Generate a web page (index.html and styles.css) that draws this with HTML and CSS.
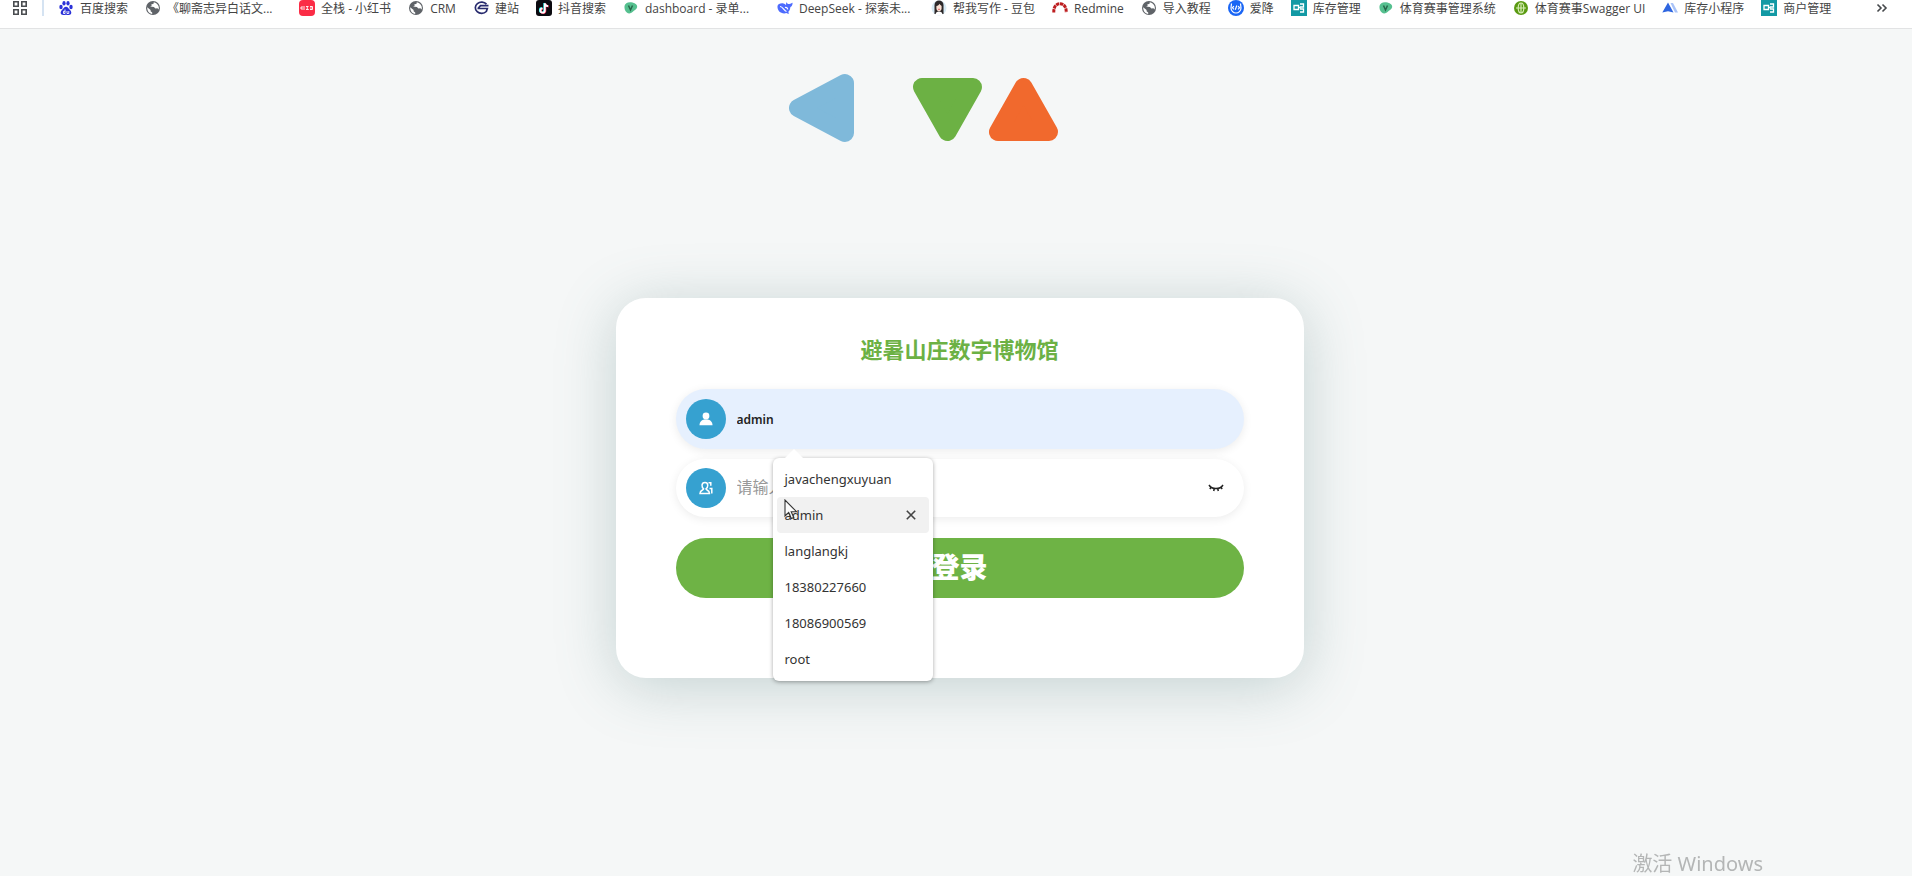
FILE: index.html
```html
<!DOCTYPE html>
<html lang="zh-CN">
<head>
    <meta charset="UTF-8">
    <meta name="viewport" content="width=device-width, initial-scale=1.0">
    <title>避暑山庄数字博物馆</title>
    <link rel="stylesheet" href="styles.css">
</head>
<body>

    <!-- shared icons -->
    <svg class="sprite" aria-hidden="true">
        <symbol id="globe" viewBox="0 0 16 16">
            <circle cx="8" cy="8" r="7" fill="#5f6368"/>
            <path d="M2.2 7.2 5.6 10v1.2l1.6 1.4v1.3C4.300 13.500 2 11 2.200 7.200zM8.800 2.200l-.4 1.700-2 .4.200 1.600-1.600.7 3.900.3 1.500 1.600 2-.2 1.200 1.300c.9-2.700-.3-6-4.800-7.400z" fill="#fff"/>
        </symbol>
        <symbol id="leaf" viewBox="0 0 16 16">
            <path d="M1.500 6C2 2.500 6 1.500 9.500 2.500c3 .8 5 2.500 4.700 4.500-.3 2.500-3 3.300-4.700 5-1.500 1.600-4 2-5.700.5C2 11 1.200 8.500 1.500 6z" fill="#55c08f"/>
            <path d="M5.500 5.500 7.500 10l2-4.500" fill="none" stroke="#27664a" stroke-width="1.500"/>
        </symbol>
        <symbol id="stock" viewBox="0 0 16 16">
            <path d="M0 0h16v16H0z" fill="#1299a4"/>
            <path d="M3 5.500h4.500v4H3zM9 4h3.500v3H9M9 9h3.500v3H9M7.500 7.500H9.500" fill="none" stroke="#fff" stroke-width="1.300"/>
        </symbol>
    </svg>

    <nav class="bookmarks">
        <button type="button" class="apps" aria-label="Apps">
            <svg width="16" height="16" viewBox="0 0 16 16" fill="none" stroke="#4a4d50" stroke-width="1.600"><path d="M1.800 1.800h4.400v4.400H1.800zM9.800 1.800h4.400v4.400H9.800zM1.800 9.800h4.400v4.400H1.800zM9.800 9.800h4.400v4.400H9.800z"/></svg>
        </button>
        <span class="divider"></span>
        <a href="#">
            <svg viewBox="0 0 16 16" fill="#2b32d8"><ellipse cx="3" cy="7" rx="1.700" ry="2.200"/><ellipse cx="6" cy="3.300" rx="1.600" ry="2.200"/><ellipse cx="10" cy="3.300" rx="1.600" ry="2.200"/><ellipse cx="13" cy="7" rx="1.700" ry="2.200"/><path d="M8 6.800c-2 0-2.600 2-4 3.200-2.200 2-1.500 5 1.200 5 1 0 1.800-.3 2.800-.3s1.800.3 2.800.3c2.700 0 3.400-3 1.200-5C10.600 8.800 10 6.800 8 6.800z"/><path d="M7 9.500v4H5.500v-2.200H7M9 11v2.500h1.800V11" fill="none" stroke="#fff" stroke-width=".9"/></svg>
            <span>百度搜索</span>
        </a>
        <a href="#">
            <svg><use href="#globe"/></svg>
            <span class="long">《聊斋志异白话文...</span>
        </a>
        <a href="#">
            <svg viewBox="0 0 16 16"><rect width="16" height="16" rx="4" fill="#fb2c46"/><path d="M3 6v4M5 6v4M2 7v2M7 6.500h2.500M8.300 6.500v3M7 9.500h2.800M11 6.500h2.500v3H11M12 6v4" stroke="#fff" stroke-width=".9" fill="none"/></svg>
            <span>全栈 - 小红书</span>
        </a>
        <a href="#">
            <svg><use href="#globe"/></svg>
            <span>CRM</span>
        </a>
        <a href="#">
            <svg viewBox="0 0 16 16" fill="none" stroke="#282b6e" stroke-width="1.700"><path d="M13.500 4.200A6.300 5.600 0 1 0 13.300 11.500l1-3H4.500M15.500 5.600H7.500L5 8.500"/></svg>
            <span>建站</span>
        </a>
        <a href="#">
            <svg viewBox="0 0 16 16"><rect width="16" height="16" rx="3" fill="#0b0a10"/><g fill="none" stroke-width="1.800"><path d="M8.200 3v7.200a2.200 2.200 0 1 1-2.300-2.200M8.200 3c.3 1.800 1.500 2.700 3.300 2.900" stroke="#25f4ee"/><path d="M9.400 3.600v7.200a2.200 2.200 0 1 1-2.300-2.200M9.400 3.600c.3 1.800 1.500 2.700 3.300 2.900" stroke="#fe2c55"/><path d="M8.800 3.300v7.200a2.200 2.200 0 1 1-2.300-2.200M8.800 3.300c.3 1.800 1.500 2.700 3.300 2.900" stroke="#fff"/></g></svg>
            <span>抖音搜索</span>
        </a>
        <a href="#">
            <svg><use href="#leaf"/></svg>
            <span class="long">dashboard - 录单...</span>
        </a>
        <a href="#">
            <svg viewBox="0 0 16 16"><path d="M.5 6C1 4 3.500 3 6.500 3.500c1 .2 1.500.8 2.500 1.500.4-1-.2-2 .4-2.700.9 1.600 2 1.800 3 1.700 1.300-.2 2-.8 3.200-1.200 0 2.200-.8 3.700-2.200 4.300-.2 2.300-1 3.900-2.200 5l1 1.400c-1.200.4-2-.1-2.700-.5C5 14.500 0 11.500.5 6z" fill="#4d6bfe"/><path d="M3 6.500c3 0 4 4.500 6.500 5M8 7.500c1.500-.5 2.500.5 2.700 1.800" fill="none" stroke="#fff" stroke-width="1.200"/></svg>
            <span class="long">DeepSeek - 探索未...</span>
        </a>
        <a href="#">
            <svg viewBox="0 0 16 16"><circle cx="8" cy="8" r="7.500" fill="#d8eaf4"/><path d="M3.500 14V5c0-3 2-4.500 4.500-4.500S12.500 2 12.500 5v9z" fill="#2d2829"/><path d="M5.400 6C7 6 8 5 8.500 3.800 9 5 10 5.500 10.600 6v2.500c0 1.500-1.200 2.700-2.600 2.700S5.400 10 5.400 8.500z" fill="#fbe0d3"/><path d="M4.500 15c0-2.500 1.500-3.600 3.500-3.600s3.500 1.100 3.500 3.600z" fill="#fff"/><path d="M7.200 9.300h1.600" stroke="#d8474c"/></svg>
            <span>帮我写作 - 豆包</span>
        </a>
        <a href="#">
            <svg viewBox="0 0 16 16" fill="none" stroke="#bd1e20" stroke-width="3"><path d="M1.800 12.500C1.500 7 4 3.800 8 3.800S14.500 7 14.200 12.500" stroke-dasharray="3.400 .6"/></svg>
            <span>Redmine</span>
        </a>
        <a href="#">
            <svg><use href="#globe"/></svg>
            <span>导入教程</span>
        </a>
        <a href="#">
            <svg viewBox="0 0 16 16"><circle cx="8" cy="8" r="8" fill="#1a66f5"/><path d="M3.500 3.500 3 8c0 3 2.500 5 5 5s5-2 5-5l-.5-4.500M5.800 6 4.500 7.800l1.500 1.600M10.200 6l1.300 1.800L10 9.400M8.800 5.500l-1.500 4.300" fill="none" stroke="#fff" stroke-width="1.200"/></svg>
            <span>爱降</span>
        </a>
        <a href="#">
            <svg><use href="#stock"/></svg>
            <span>库存管理</span>
        </a>
        <a href="#">
            <svg><use href="#leaf"/></svg>
            <span>体育赛事管理系统</span>
        </a>
        <a href="#">
            <svg viewBox="0 0 16 16"><circle cx="8" cy="8" r="7" fill="#5a9a12"/><ellipse cx="8" cy="8" rx="2.800" ry="5" fill="none" stroke="#d7edb5" stroke-width="1.200"/><path d="M8 3v10M3 8h10" stroke="#d7edb5" stroke-width="1.200"/></svg>
            <span>体育赛事Swagger UI</span>
        </a>
        <a href="#">
            <svg viewBox="0 0 16 16"><path d="M8.500 3h2.500l5 9.500h-3z" fill="#a9c3f8"/><path d="M6 2.500 11.500 12.500 6 11.300.3 12.500z" fill="#2f66e0"/></svg>
            <span>库存小程序</span>
        </a>
        <a href="#">
            <svg><use href="#stock"/></svg>
            <span>商户管理</span>
        </a>
        <button type="button" class="more" aria-label="More bookmarks">
            <svg width="12" height="16" viewBox="0 0 12 16" fill="none" stroke="#45484b" stroke-width="1.600"><path d="M1.500 4.500 5 8l-3.500 3.500M6.500 4.500 10 8l-3.500 3.500"/></svg>
        </button>
    </nav>

    <main class="page">
        <svg class="triangles" viewBox="0 0 342 72" aria-hidden="true">
            <g stroke-width="18" stroke-linejoin="round">
                <path d="M9 36 56 11v50z" fill="#7fb9da" stroke="#7fb9da"/>
                <path d="M133 15h51l-25.500 45z" fill="#6cb144" stroke="#6cb144"/>
                <path d="M209 60h51L234.500 15z" fill="#f1692d" stroke="#f1692d"/>
            </g>
        </svg>

        <form class="login-card">
            <h1>避暑山庄数字博物馆</h1>

            <div class="field filled">
                <label for="username" aria-label="用户名">
                    <svg width="14" height="14" viewBox="0 0 14 14" fill="#fff"><circle cx="7" cy="4" r="3.400"/><path d="M.5 13.200C.5 9.800 3 8 5.200 7.600h3.600C11 8 13.500 9.800 13.500 13.200z"/></svg>
                </label>
                <input type="text" id="username" value="admin" autocomplete="off">

                <div class="suggestions">
                    <ul>
                        <li><button type="button">javachengxuyuan</button></li>
                        <li class="active">
                            <button type="button">admin</button>
                            <button type="button" class="remove" aria-label="删除">
                                <svg width="10" height="10" viewBox="0 0 10 10" stroke="#444" stroke-width="1.600"><path d="M.8.8l8.400 8.400M9.200.8.800 9.200"/></svg>
                            </button>
                            <svg class="cursor" width="14" height="21" viewBox="0 0 14 21"><path d="M1 1v16l3.700-3.500L7.300 19.500l2.500-1.100-2.600-5.700H12.500z" fill="#fff" fill-opacity=".75" stroke="#333" stroke-width="1.100"/></svg>
                        </li>
                        <li><button type="button">langlangkj</button></li>
                        <li><button type="button">18380227660</button></li>
                        <li><button type="button">18086900569</button></li>
                        <li><button type="button">root</button></li>
                    </ul>
                </div>
            </div>

            <div class="field">
                <label for="password" aria-label="密码">
                    <svg width="14" height="14" viewBox="0 0 14 14" fill="none" stroke="#fff" stroke-width="1.500"><path d="M6 1.500c-4 0-3.500 5-1.300 6.300-.1 1.500-3.700 1-3.700 4.700h9.500c0-3.700-3.500-3.200-3.600-4.700C9.200 6.500 9.800 1.500 6 1.500zM9.500 1.800h3M11.800 1.800v3M10.500 7.500h2.300v5"/></svg>
                </label>
                <input type="password" id="password" placeholder="请输入密码">
                <button type="button" class="eye" aria-label="显示密码">
                    <svg width="16" height="10" viewBox="0 0 16 10" fill="none" stroke="#222" stroke-width="1.500"><path d="M1 2c3 4.700 11 4.700 14 0M3.300 4.200 1.800 6M6.300 5.500 5.700 8M9.700 5.500 10.300 8M12.700 4.200 14.200 6"/></svg>
                </button>
            </div>

            <button type="button" class="submit">登录</button>
        </form>
    </main>

    <div class="watermark">激活 Windows</div>

</body>
</html>
```
FILE: styles.css
```css
* {
    box-sizing: border-box;
}

body {
    margin: 0;
    min-height: 100vh;
    background-color: #f5f7f7;
    font-family: "Noto Sans", "Noto Sans CJK SC", sans-serif;
    color: #333;
}

button {
    padding: 0;
    border: none;
    background: none;
    font-family: inherit;
    color: inherit;
    cursor: pointer;
}

.sprite {
    display: none;
}

/* bookmarks bar */
.bookmarks {
    display: flex;
    align-items: flex-start;
    gap: 17px;
    height: 29px;
    padding: 0 24px 0 12px;
    background-color: #fff;
    border-bottom: 1px solid #e2e3e4;
    font-family: "Open Sans", "Noto Sans CJK SC", sans-serif;
    font-size: 12px;
    line-height: 18px;
    white-space: nowrap;
}

.bookmarks svg {
    display: block;
    flex: none;
}

.bookmarks a {
    display: flex;
    gap: 6px;
    color: #444;
    text-decoration: none;
}

.bookmarks a svg {
    width: 16px;
    height: 16px;
}

.bookmarks .long {
    width: 115px;
}

.divider {
    width: 2px;
    height: 16px;
    margin: 0 -3px;
    background-color: #d5e3f2;
}

.more {
    margin-left: auto;
}

/* login page */
.page {
    display: flex;
    flex-direction: column;
    align-items: center;
    padding: 43px 0 60px 7px;
}

.triangles {
    width: 342px;
    height: 72px;
    margin-bottom: 154px;
}

.login-card {
    width: 90%;
    max-width: 688px;
    padding: 35px 60px 80px;
    background-color: #fff;
    border-radius: 30px;
    box-shadow: 0 8px 60px rgba(90, 130, 130, 0.32);
}

.login-card h1 {
    margin: 0 0 24px;
    font-size: 22px;
    font-weight: 600;
    line-height: 32px;
    text-align: center;
    color: #6cb144;
}

.field {
    position: relative;
    display: flex;
    align-items: center;
    gap: 11px;
    height: 58px;
    margin-bottom: 10px;
    padding: 0 20px 0 10px;
    background-color: #fff;
    border-radius: 30px;
    box-shadow: 0 2px 10px rgba(0, 0, 0, 0.08);
}

.field.filled {
    z-index: 2;
    height: 60px;
    background-color: #e6f0fe;
}

.field label {
    display: flex;
    flex: none;
    align-items: center;
    justify-content: center;
    width: 40px;
    height: 40px;
    border-radius: 50%;
    background-color: #36a1d0;
}

.field input {
    flex: 1;
    min-width: 0;
    height: 40px;
    padding: 0;
    border: none;
    outline: none;
    background: transparent;
    font-family: inherit;
    font-size: 12px;
    font-weight: 600;
    color: #222;
}

.field input::placeholder {
    font-size: 16px;
    font-weight: 400;
    color: #999;
}

.eye svg {
    display: block;
}

.submit {
    display: block;
    width: 100%;
    height: 60px;
    margin-top: 21px;
    padding-bottom: 2px;
    border-radius: 30px;
    background-color: #6eb345;
    font-size: 28px;
    font-weight: 900;
    line-height: 58px;
    color: #fff;
}

/* autofill menu */
.suggestions {
    position: absolute;
    top: 69px;
    left: 97px;
    width: 160px;
    padding: 3px 4px 4px;
    background-color: #fff;
    border-radius: 6px;
    box-shadow: 0 1px 4px rgba(0, 0, 0, 0.35);
}

.suggestions::before {
    content: "";
    position: absolute;
    top: -9px;
    left: 12px;
    border: 9px solid transparent;
    border-top: 0;
    border-bottom-color: #fff;
}

.suggestions ul {
    margin: 0;
    padding: 0;
    list-style: none;
}

.suggestions li {
    position: relative;
    display: flex;
    align-items: center;
    justify-content: space-between;
    height: 36px;
    padding: 0 13px 0 8px;
    border-radius: 4px;
    font-size: 13px;
}

.suggestions li button {
    font-size: 13px;
    line-height: 20px;
}

.suggestions li.active {
    background-color: #f1f1f1;
}

.cursor {
    position: absolute;
    top: 2px;
    left: 7px;
}

.watermark {
    position: fixed;
    right: 149px;
    bottom: 0;
    font-size: 20px;
    line-height: 24px;
    color: #b4b6b6;
}
```
